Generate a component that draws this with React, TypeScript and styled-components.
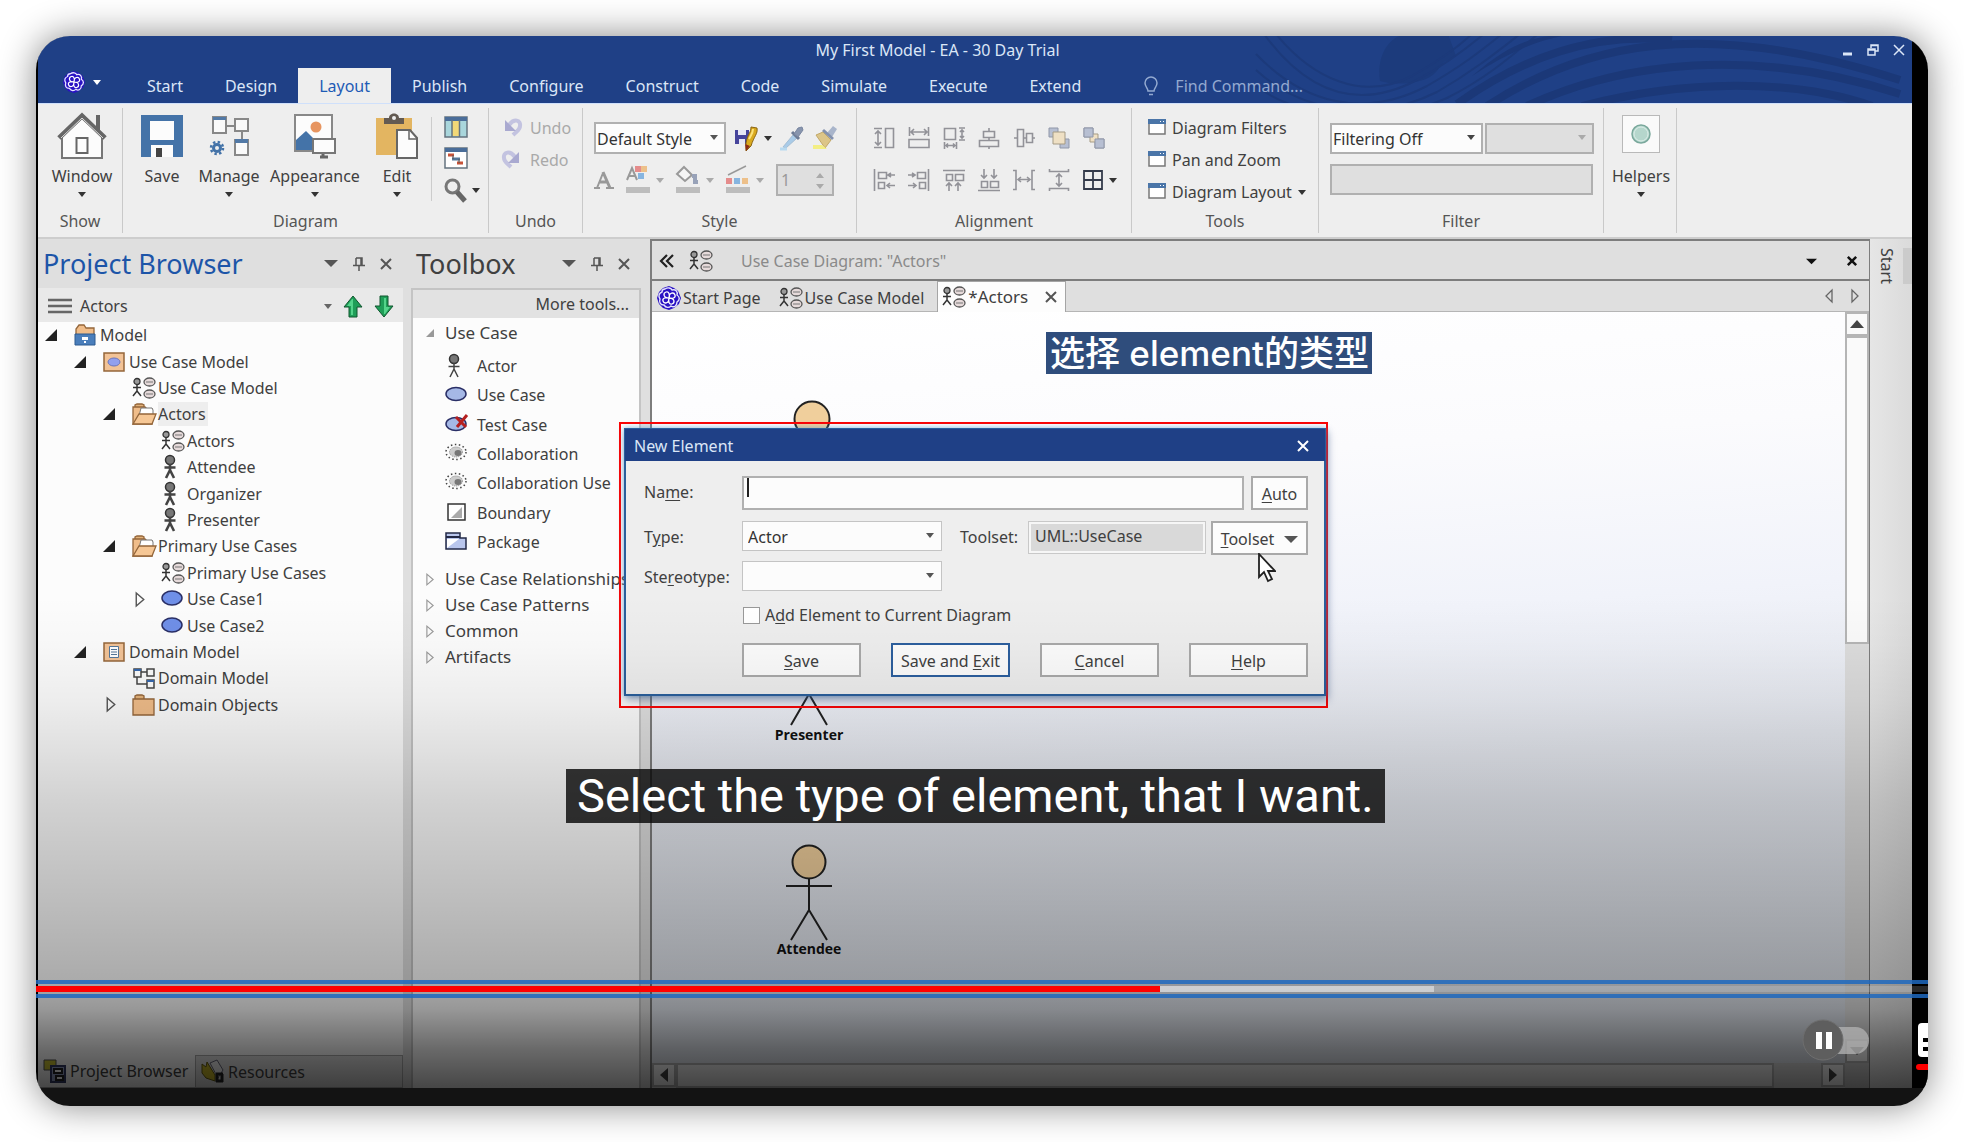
import React from 'react';
import styled, { createGlobalStyle, css } from 'styled-components';

const Global = createGlobalStyle`
  *, *::before, *::after { box-sizing: border-box; }
  body { margin: 0; background: #fff; overflow: hidden; }
  button, input, select { font: inherit; color: inherit; margin: 0; }
  button { background: none; border: 0; padding: 0; cursor: pointer; }
  ul { list-style: none; margin: 0; padding: 0; }
  h2 { margin: 0; font-weight: 400; }
  svg { display: block; flex: none; }
  u { text-underline-offset: 2px; }
`;

const Page = styled.div`
  padding: 36px;
  font: 16px/24px "Noto Sans", "Open Sans", sans-serif;
  color: #404040;
`;

const Frame = styled.main`
  position: relative;
  display: flex;
  flex-direction: column;
  min-height: calc(100vh - 72px);
  border-radius: 34px;
  overflow: hidden;
  background: #131313;
`;

const Shadow = styled.div`
  border-radius: 34px;
  box-shadow: 0 0 36px rgba(0, 0, 0, 0.48);
`;

const Video = styled.div`
  flex: 1;
  display: flex;
  flex-direction: column;
  margin-bottom: 18px;
  border-left: 2px solid #000;
  border-right: 16px solid #000;
  background: #dfdfdf;
`;

/* ---------- title bar ---------- */
const TitleBar = styled.header`
  position: relative;
  height: 67px;
  display: grid;
  grid-template-rows: 28px 39px;
  background: #1f4086;
  color: #dbe6f7;
`;
const Swirl = styled.svg`
  position: absolute;
  right: 0;
  top: 0;
`;
const TitleRow = styled.div`
  position: relative;
  display: grid;
  grid-template-columns: 1fr auto 1fr;
  align-items: center;
  padding: 0 7px 0 0;
  line-height: 28px;
`;
const Title = styled.span`
  padding-right: 68px;
`;
const WinControls = styled.div`
  display: flex;
  justify-content: flex-end;
  gap: 14px;
`;
const TabRow = styled.nav`
  position: relative;
  display: flex;
  align-items: flex-end;
`;
const AppButton = styled.button`
  display: flex;
  align-items: center;
  gap: 8px;
  width: 88px;
  height: 42px;
  padding-left: 25px;
`;
const Tab = styled.button<{ $active?: boolean }>`
  height: 35px;
  padding: 0 21px;
  line-height: 36px;
  color: ${(p) => (p.$active ? '#1d5bb5' : '#dbe6f7')};
  background: ${(p) => (p.$active ? '#eeeeee' : 'transparent')};
`;
const FindBox = styled.label`
  display: flex;
  align-items: center;
  gap: 17px;
  height: 34px;
  margin-left: 42px;
`;
const FindInput = styled.input`
  width: 140px;
  padding: 0;
  border: 0;
  outline: 0;
  background: none;
  &::placeholder { color: #93a9d0; opacity: 1; }
`;

/* ---------- ribbon ---------- */
const Ribbon = styled.section`
  display: flex;
  height: 136px;
  padding: 4px 0;
  background: #eeeeee;
  border-bottom: 2px solid #cdcdcd;
  border-top: 1px solid #cfe0fb;
`;
const Group = styled.div<{ $w: number }>`
  display: flex;
  flex-direction: column;
  width: ${(p) => p.$w}px;
  border-right: 1px solid #c9c9c9;
`;
const GroupBody = styled.div<{ $pad?: number }>`
  flex: 1;
  display: flex;
  padding-left: ${(p) => p.$pad ?? 0}px;
`;
const Caption = styled.div`
  text-align: center;
  line-height: 24px;
  color: #555;
`;
const Big = styled.button<{ $w: number }>`
  display: flex;
  flex: none;
  flex-direction: column;
  align-items: center;
  width: ${(p) => p.$w}px;
  white-space: nowrap;
`;
const BigIcon = styled.span`
  height: 56px;
  display: flex;
  align-items: center;
`;
const ArrowSlot = styled.span`
  height: 12px;
  display: flex;
  align-items: center;
`;
const InnerSep = styled.span`
  width: 1px;
  height: 84px;
  margin: 9px 12px 0 0;
  background: #cccccc;
`;
const IconColumn = styled.div`
  display: flex;
  flex-direction: column;
  gap: 9px;
  padding-top: 8px;
`;
const Inline = styled.button`
  display: flex;
  align-items: center;
  gap: 6px;
  white-space: nowrap;
`;
const LinkColumn = styled.div<{ $gap: number; $dim?: boolean }>`
  display: flex;
  flex-direction: column;
  gap: ${(p) => p.$gap}px;
  padding-top: 8px;
  color: ${(p) => (p.$dim ? '#a9a9a9' : '#404040')};
`;
const Rows = styled.div`
  display: flex;
  flex-direction: column;
  gap: 10px;
  padding-top: 14px;
`;
const Row = styled.div<{ $gap: number }>`
  display: flex;
  align-items: center;
  gap: ${(p) => p.$gap}px;
  height: 32px;
`;
const SelectWrap = styled.span<{ $w: number; $h: number }>`
  position: relative;
  display: block;
  width: ${(p) => p.$w}px;
  height: ${(p) => p.$h}px;
  > svg {
    position: absolute;
    right: 8px;
    top: 50%;
    margin-top: -3px;
    pointer-events: none;
  }
`;
const fieldLook = css<{ $dim?: boolean; $soft?: boolean }>`
  border: ${(p) => (p.$soft ? 1 : 2)}px solid ${(p) => (p.$soft ? '#c4c4c4' : '#b0b0b0')};
  border-radius: 0;
  background: ${(p) => (p.$dim ? '#dfdfdf' : '#fcfcfc')};
  outline: 0;
  opacity: 1;
`;
const Select = styled.select<{ $dim?: boolean; $soft?: boolean }>`
  ${fieldLook}
  appearance: none;
  width: 100%;
  height: 100%;
  padding: 2px 2px 0;
  padding-left: ${(p) => (p.$soft ? 5 : 1)}px;
  color: #333;
`;
const Field = styled.input<{ $dim?: boolean; $soft?: boolean; $w: number; $h: number }>`
  ${fieldLook}
  width: ${(p) => p.$w}px;
  height: ${(p) => p.$h}px;
  padding: 0 3px;
  &:disabled { color: #999; }
`;
const Spinner = styled.span`
  position: relative;
  > svg { position: absolute; right: 10px; top: 9px; }
`;
const HelperBox = styled.span`
  display: grid;
  place-items: center;
  width: 38px;
  height: 38px;
  margin-bottom: 4px;
  border: 1px solid #b9b9b9;
  background: #fafafa;
`;

/* ---------- workspace ---------- */
const Work = styled.div`
  flex: 1;
  display: flex;
  min-height: 0;
`;
const Panel = styled.aside<{ $w: number; $ml?: number }>`
  display: flex;
  flex-direction: column;
  width: ${(p) => p.$w}px;
  margin-left: ${(p) => p.$ml ?? 0}px;
`;
const PanelHead = styled.header`
  display: flex;
  align-items: center;
  height: 49px;
  padding: 0 11px 0 5px;
`;
const PanelTitle = styled.h2<{ $blue?: boolean }>`
  flex: 1;
  font-size: 27px;
  line-height: 48px;
  color: ${(p) => (p.$blue ? '#1d55a8' : '#404040')};
`;
const HeadIcons = styled.span`
  display: flex;
  align-items: center;
  gap: 15px;
`;
const BrowserBar = styled.div`
  display: flex;
  align-items: center;
  height: 34px;
  padding: 2px 9px 0 10px;
  background: #e9e9e9;
`;
const BarName = styled.span`
  flex: 1;
  padding-left: 8px;
`;
const BarIcons = styled.span`
  display: flex;
  align-items: center;
  gap: 11px;
`;
const Tree = styled.ul`
  display: grid;
  grid-auto-rows: 1fr;
  height: 396px;
`;
const TreePane = styled.div`
  flex: 1;
  background: #fcfcfc;
`;
const TreeItem = styled.li<{ $level: number }>`
  display: grid;
  grid-template-columns: 29px 26px auto;
  justify-content: start;
  align-items: center;
  padding-left: ${(p) => 7 + p.$level * 29}px;
`;
const TreeLabel = styled.span<{ $sel?: boolean }>`
  padding-right: 2px;
  background: ${(p) => (p.$sel ? '#eeeeee' : 'transparent')};
  white-space: nowrap;
`;
const BottomTabs = styled.div`
  display: flex;
  height: 33px;
`;
const BottomTab = styled.button<{ $active?: boolean }>`
  display: flex;
  align-items: center;
  gap: 4px;
  padding: 0 6px;
  background: ${(p) => (p.$active ? '#fcfcfc' : '#dfdfdf')};
  border: 1px solid #aaa;
  border-top-width: ${(p) => (p.$active ? 0 : 1)}px;
  border-left: 0;
  flex: ${(p) => (p.$active ? '0 0 158px' : '1')};
`;
const ToolBody = styled.div`
  flex: 1;
  border: 2px solid #c4c4c4;
  border-bottom: 0;
  background: #fcfcfc;
`;
const MoreTools = styled.button`
  display: block;
  width: 100%;
  height: 28px;
  padding-right: 10px;
  text-align: right;
  background: #e2e2e2;
`;
const SectionRow = styled.button<{ $open?: boolean }>`
  display: grid;
  grid-template-columns: 19px 1fr;
  align-items: center;
  width: 100%;
  height: ${(p) => (p.$open ? 30 : 26)}px;
  padding-left: 13px;
  text-align: left;
  white-space: nowrap;
  overflow: hidden;
  font-size: 17px;
`;
const ToolList = styled.ul`
  display: grid;
  grid-auto-rows: 1fr;
  height: 206px;
  margin: 3px 0 9px;
  padding-left: 32px;
`;
const ToolItem = styled.li`
  display: grid;
  grid-template-columns: 32px 1fr;
  align-items: center;
  white-space: nowrap;
`;

/* ---------- document ---------- */
const Doc = styled.section`
  flex: 1;
  display: flex;
  flex-direction: column;
  min-width: 0;
  margin-left: 9px;
  border: 2px solid #7d7d7d;
  border-width: 2px 1px 0 2px;
`;
const DocHead = styled.header`
  display: flex;
  align-items: center;
  height: 40px;
  padding: 2px 12px 0 8px;
  border-bottom: 2px solid #7d7d7d;
  color: #8a8a8a;
`;
const DocTitle = styled.span`
  flex: 1;
  padding-left: 28px;
`;
const DocTabs = styled.div`
  display: flex;
  align-items: flex-end;
  height: 31px;
  border-bottom: 1px solid #b5b5b5;
`;
const DocTab = styled.button<{ $active?: boolean }>`
  display: flex;
  align-items: center;
  gap: 2px;
  height: ${(p) => (p.$active ? 31 : 30)}px;
  padding: 0 ${(p) => (p.$active ? 8 : 12)}px 0 4px;
  margin-bottom: -1px;
  border: 1px solid ${(p) => (p.$active ? '#a5a5a5' : 'transparent')};
  border-bottom: 0;
  background: ${(p) => (p.$active ? '#fdfdfd' : 'transparent')};
  font-size: ${(p) => (p.$active ? 17 : 16)}px;
  white-space: nowrap;
`;
const CloseGap = styled.span`
  padding-left: 15px;
`;
const ScrollTabs = styled.span`
  display: flex;
  gap: 18px;
  margin: 0 10px 9px auto;
`;
const DocMain = styled.div`
  flex: 1;
  display: grid;
  grid-template-columns: 1fr 24px;
  grid-template-rows: 1fr 25px;
`;
const Canvas = styled.div`
  position: relative;
  background: linear-gradient(176deg, #ffffff 0%, #fbfbfd 22%, #f1f3fa 42%, #e6e9f0 60%, #dce1e9 100%);
`;
const VScroll = styled.div`
  display: flex;
  flex-direction: column;
  background: #dcdcdc;
`;
const HScroll = styled.div`
  display: flex;
  background: #d6d6d6;
`;
const ScrollBtn = styled.button`
  display: grid;
  place-items: center;
  width: 24px;
  height: 24px;
  border: 2px solid #b5b5b5;
  background: #fafafa;
`;
const VThumb = styled.div`
  height: 308px;
  margin-bottom: auto;
  border: 2px solid #b5b5b5;
  background: #fafafa;
`;
const HThumb = styled.div`
  flex: 0 0 92%;
  margin-right: auto;
  border: 2px solid #b5b5b5;
  background: #f0f0f0;
`;
const Corner = styled.div`
  background: #c8c8c8;
`;
const Figure = styled.figure<{ $x: number; $y: number }>`
  position: absolute;
  left: ${(p) => p.$x}px;
  top: ${(p) => p.$y}px;
  width: 100px;
  margin: 0;
  display: flex;
  flex-direction: column;
  align-items: center;
  font: 700 14px/18px "Open Sans", sans-serif;
  color: #111;
`;
const SideStrip = styled.aside`
  display: flex;
  width: 42px;
  padding-top: 9px;
  background: linear-gradient(90deg, #e6e6e6, #dadada);
`;
const SideLabel = styled.button`
  writing-mode: vertical-rl;
  align-self: flex-start;
  width: 33px;
  line-height: 33px;
`;
const SideMark = styled.span`
  width: 9px;
  height: 36px;
  background: #cbcbcb;
`;

/* ---------- dialog ---------- */
const Highlight = styled.div`
  position: absolute;
  left: 583px;
  top: 386px;
  width: 709px;
  border: 2px solid #fb0505;
  padding: 4px 0 10px 3px;
`;
const Dialog = styled.form`
  border: 2px solid #2a5f9c;
  background: #eeeeee;
  box-shadow: 2px 4px 8px rgba(40, 60, 110, 0.4), 0 0 5px rgba(90, 170, 230, 0.6);
`;
const DialogHead = styled.header`
  display: flex;
  align-items: center;
  justify-content: space-between;
  height: 32px;
  margin: -1px;
  padding: 2px 16px 0 9px;
  background: #1f4086;
  color: #dbe6f7;
`;
const DialogBody = styled.div`
  display: flex;
  flex-direction: column;
  padding: 16px 16px 17px 18px;
`;
const FormRow = styled.div<{ $h: number; $mb: number }>`
  display: flex;
  align-items: flex-start;
  height: ${(p) => p.$h}px;
  margin-bottom: ${(p) => p.$mb}px;
`;
const FormLabel = styled.label<{ $w: number; $pad?: number }>`
  width: ${(p) => p.$w}px;
  padding-left: ${(p) => p.$pad ?? 0}px;
  line-height: 32px;
  white-space: nowrap;
`;
const PushButton = styled.button<{ $w: number; $def?: boolean; $right?: boolean }>`
  display: flex;
  align-items: center;
  justify-content: center;
  gap: 10px;
  width: ${(p) => p.$w}px;
  height: 34px;
  margin-left: ${(p) => (p.$right ? 'auto' : 0)};
  padding-top: 2px;
  border: ${(p) => (p.$def ? '2px solid #2c5f9e' : '2px solid #a9a9a9')};
  background: #fcfcfc;
  white-space: nowrap;
`;
const CheckLabel = styled.label`
  display: flex;
  align-items: center;
  gap: 5px;
  height: 24px;
  padding-left: 99px;
  margin-bottom: 16px;
`;
const Check = styled.input`
  appearance: none;
  width: 17px;
  height: 17px;
  border: 1px solid #999;
  background: #fff;
`;
const ButtonRow = styled.div`
  display: flex;
  justify-content: space-between;
  padding-left: 98px;
`;
const Pointer = styled.svg`
  position: absolute;
  left: 637px;
  top: 129px;
`;
const NameBox = styled.span`
  position: relative;
  display: block;
  height: 34px;
`;
const Caret = styled.i`
  position: absolute;
  left: 5px;
  top: 2px;
  width: 2px;
  height: 19px;
  background: #222;
`;
const ReadOnly = styled.input`
  width: 178px;
  height: 33px;
  padding: 0 6px 4px;
  border: 1px solid #c8c8c8;
  outline: 2px solid #f6f6f6;
  outline-offset: -3px;
  border-radius: 0;
  background: #d9d9d9;
`;

/* ---------- player overlays ---------- */
const Shade = styled.div`
  position: absolute;
  inset: 560px 0 18px 2px;
  pointer-events: none;
  background: linear-gradient(
    180deg,
    rgba(0, 0, 0, 0) 0%,
    rgba(0, 0, 0, 0.02) 10%,
    rgba(0, 0, 0, 0.06) 21%,
    rgba(0, 0, 0, 0.11) 31%,
    rgba(0, 0, 0, 0.17) 42%,
    rgba(0, 0, 0, 0.25) 62%,
    rgba(0, 0, 0, 0.32) 78%,
    rgba(0, 0, 0, 0.4) 84%,
    rgba(0, 0, 0, 0.58) 92%,
    rgba(0, 0, 0, 0.72) 100%
  );
`;
const TopCaption = styled.p`
  position: absolute;
  left: 1010px;
  top: 296px;
  margin: 0;
  padding: 0 3px 0 4px;
  background: #2f4d7c;
  color: #fff;
  font: 500 35px/42px Inter, "Noto Sans CJK SC", sans-serif;
  white-space: nowrap;
`;
const Subtitle = styled.p`
  position: absolute;
  left: 530px;
  top: 733px;
  margin: 0;
  padding: 0 11px;
  background: rgba(8, 8, 8, 0.82);
  color: #fff;
  font: 47px/54px Roboto, sans-serif;
  white-space: nowrap;
`;
const Progress = styled.div`
  position: absolute;
  left: 0;
  right: 0;
  bottom: 108px;
  height: 18px;
  padding: 2px 0;
  border: 4px solid rgba(30, 105, 190, 0.85);
  border-width: 4px 0;
`;
const ProgressTrack = styled.div`
  display: flex;
  height: 6px;
  background: rgba(255, 255, 255, 0.16);
`;
const Played = styled.div`
  background: #ff0000;
`;
const Buffered = styled.div`
  background: rgba(255, 255, 255, 0.45);
`;
const Autoplay = styled.button`
  position: absolute;
  right: 58px;
  bottom: 45px;
`;
const CcButton = styled.button`
  position: absolute;
  right: -26px;
  bottom: 36px;
  display: grid;
  gap: 7px;
  justify-items: start;
`;

/* ---------- icons ---------- */
type Kids = { children?: React.ReactNode };
const I = ({ w = 22, h = 22, vb, children }: Kids & { w?: number; h?: number; vb?: string }) => (
  <svg width={w} height={h} viewBox={vb ?? `0 0 ${w} ${h}`} fill="none" overflow="visible" aria-hidden="true">
    {children}
  </svg>
);
const Down = ({ s = 8, c = '#333' }: { s?: number; c?: string }) => (
  <I w={s} h={s > 10 ? 7 : 5} vb={s > 10 ? '0 0 14 7' : '0 0 8 5'}>
    <path d={s > 10 ? 'M0 0h14L7 7z' : 'M0 0h8L4 5z'} fill={c} />
  </I>
);
const Cross = ({ s = 12, c = '#555', w = 2 }: { s?: number; c?: string; w?: number }) => (
  <I w={s} h={s} vb="0 0 12 12"><path d="M1 1l10 10M11 1L1 11" stroke={c} strokeWidth={w} /></I>
);
const Pin = () => (
  <I w={12} h={14}><path d="M3 1h6v7M3 1v7M8 1v7M0 8.500h12M6 9v5" stroke="#555" strokeWidth="1.500" /></I>
);
const Logo = ({ s = 22 }: { s?: number }) => (
  <I w={s} h={s} vb="0 0 24 24">
    <path d="M12 0l5 2 4 3 3 7-2 6-5 4-5 2-6-2-4-4-2-6 2-6 4-4z" fill="#2a12c4" />
    <path d="M8 3c3-2 6-1 7 1 4-1 6 2 5 5 3 2 3 5 0 7 0 4-3 6-6 4-2 2-5 2-7-1-4 0-5-3-4-6-2-3-1-6 2-7 0-2 1-3 3-3z" stroke="#e6e4ff" strokeWidth="1.400" />
    <path d="M12 12C6 12 6 7 9 6s4 3 3 6c0-6 5-6 6-3s-3 4-6 3c6 0 6 5 3 6s-4-3-3-6c0 6-5 6-6 3s3-4 6-3" stroke="#fff" strokeWidth="1.300" />
  </I>
);
const UseCaseDiagram = () => (
  <I w={24} h={22}>
    <circle cx="5" cy="4.500" r="3" fill="#999" stroke="#333" strokeWidth="1.300" />
    <path d="M5 8v6M1 10.500h8M5 14l-4 5M5 14l4 5" stroke="#333" strokeWidth="1.500" />
    <ellipse cx="17.500" cy="5" rx="5.500" ry="4" fill="#e6dada" stroke="#555" strokeWidth="1.300" />
    <ellipse cx="17.500" cy="17" rx="5.500" ry="4" fill="#e6dada" stroke="#555" strokeWidth="1.300" />
    <path d="M14 5h7M14 17h7" stroke="#777" />
  </I>
);
const Person = ({ thin }: { thin?: boolean }) => (
  <I w={22} h={24}>
    <circle cx="9" cy="5" r="4.500" fill="#777" stroke="#333" strokeWidth="1.500" />
    <path d="M9 9v7M3.500 12.500h11M9 15l-4 8M9 15l4 8" stroke="#444" strokeWidth={thin ? 1.5 : 2.6} />
  </I>
);
const Oval = ({ soft }: { soft?: boolean }) => (
  <I w={22} h={16}><ellipse cx="11" cy="7" rx="10" ry={soft ? 6.5 : 7} fill={soft ? '#a5b8e6' : '#6f8fe8'} stroke="#2a2f66" strokeWidth="1.500" /></I>
);
const Folder = ({ open }: { open?: boolean }) => (
  <I w={24} h={22}>
    <path d="M3 5V2l2-1h5l2 1v3" fill="#e3b27a" stroke="#94663a" strokeWidth="1.300" />
    <path d={open ? 'M1 4h12l2 2h5v15H1z' : 'M1 5h21v16H1z'} fill="#f0bd8a" stroke="#94663a" strokeWidth="1.300" />
    {open && <path d="M9 5h11l1 2v6H7z" fill="#fff" stroke="#777" />}
    {open && <path d="M1 21L7 11h17l-4 10z" fill="#f6c795" stroke="#94663a" strokeWidth="1.300" />}
  </I>
);
const ModelRoot = () => (
  <I w={22} h={22}>
    <path d="M2 10V5l3-4h5l2 3h8v6" fill="#f0bd8a" stroke="#94663a" strokeWidth="1.300" />
    <path d="M1 10h20v11H1z" fill="#4a7ebb" stroke="#2c5a90" />
    <path d="M8 13h6v3H8z" fill="#fff" /><path d="M11 17v2" stroke="#fff" strokeWidth="2" />
  </I>
);
const ViewIcon = ({ kind }: { kind: 'oval' | 'list' }) => (
  <I w={22} h={20}>
    <path d="M1 1h20v18H1z" fill="#f2c397" stroke="#94663a" strokeWidth="1.500" />
    {kind === 'oval' ? (
      <ellipse cx="11" cy="10" rx="6" ry="4" fill="#92a0ee" stroke="#6b75bb" />
    ) : (
      <><path d="M6.500 4.500h9v11h-9z" fill="#fff" stroke="#557799" /><path d="M8 7.500h6M8 10h6M8 12.500h6" stroke="#557799" /></>
    )}
  </I>
);
const ClassDiagram = () => (
  <I w={24} h={22}>
    <path d="M2 2h7v8H2zM15 2h7v7h-7zM15 13h7v8h-7zM9 5h6M5 10v7h10" stroke="#444" strokeWidth="1.500" />
    <path d="M2 2h7v2H2zM15 13h7v2h-7z" fill="#3567ad" />
  </I>
);
const Expanded = ({ c = '#222', s = 12 }: { c?: string; s?: number }) => (
  <I w={s} h={s} vb="0 0 12 12"><path d="M12 0v12H0z" fill={c} /></I>
);
const Collapsed = ({ c = '#555', w = 9 }: { c?: string; w?: number }) => (
  <I w={w} h={w + 5} vb="0 0 9 14"><path d="M1 1l7 6-7 6z" stroke={c} strokeWidth="1.300" /></I>
);
const ArrowCell = styled.span<{ $in?: boolean }>`
  padding-left: ${(p) => (p.$in ? 3 : 0)}px;
`;
const Green = ({ down }: { down?: boolean }) => (
  <I w={20} h={21}>
    <g transform={down ? 'rotate(180 10 10.5)' : undefined}>
      <path d="M10 0l9 11h-5v10H6V11H1z" fill="#1f9e58" stroke="#11562f" />
      <path d="M9 3L4 10h4v9h2V3z" fill="#54d48b" />
    </g>
  </I>
);
const Cloud = () => (
  <I w={22} h={18}>
    <ellipse cx="11" cy="7" rx="10" ry="7.500" stroke="#444" strokeWidth="1.500" strokeDasharray="1.500 2.500" />
    <ellipse cx="11" cy="7" rx="6.500" ry="5" fill="#ccc" stroke="#888" strokeDasharray="1 1" />
    <ellipse cx="13" cy="8" rx="3.500" ry="3" fill="#777" />
  </I>
);
const WindowIcon = () => (
  <I w={18} h={16}>
    <path d="M1 0h16v14H1z" fill="#fff" stroke="#777" strokeWidth="1.500" />
    <path d="M0 -1h18v5H0z" fill="#4a75a8" /><path d="M12 1.500h1M15 1.500h1" stroke="#fff" />
  </I>
);
const House = () => (
  <I w={46} h={46}>
    <path d="M39 2v16" stroke="#666" strokeWidth="4" />
    <path d="M3 22L23 3l20 19v23H3z" fill="#fcfcfc" stroke="#777" strokeWidth="2" />
    <path d="M0 25L23 3l23 22" stroke="#666" strokeWidth="5" />
    <path d="M2 25L23 5l21 20" stroke="#ddd" strokeWidth="1" />
    <path d="M17.500 25h11v15h-11z" stroke="#666" strokeWidth="2" />
  </I>
);
const Disk = () => (
  <I w={42} h={42}>
    <path d="M0 0h42v42H0z" fill="#4473a8" />
    <path d="M9 6h24v19H9zM10 30h22v12H10z" fill="#fcfcfc" /><path d="M15 33h6v9h-6z" fill="#444" />
  </I>
);
const ManageIcon = () => (
  <I w={40} h={42}>
    <path d="M4 2h13v16H4zM26 4h13v12H26zM26 25h13v15H26zM17 11h9M33 16v9" stroke="#888" strokeWidth="2" fill="#fafafa" />
    <path d="M4 2h13v3H4zM26 24h13v4H26z" fill="#5279a6" />
    <circle cx="8" cy="33" r="3.500" stroke="#4473a8" strokeWidth="3" />
    <circle cx="8" cy="33" r="6" stroke="#4473a8" strokeWidth="2.500" strokeDasharray="2.400 2.300" />
  </I>
);
const PictureIcon = () => (
  <I w={42} h={44}>
    <path d="M1 1h37v36H1z" fill="#fcfcfc" stroke="#888" strokeWidth="2" />
    <path d="M2 26l10-9 8 8v11H2z" fill="#4473a8" /><circle cx="22" cy="13" r="5.500" fill="#e79560" />
    <path d="M19 25h22v14H19z" fill="#fcfcfc" stroke="#777" strokeWidth="2" /><path d="M29 40v3M26 43h8" stroke="#666" strokeWidth="3" />
  </I>
);
const Clipboard = () => (
  <I w={42} h={46}>
    <path d="M0 5h36v37H0z" fill="#e3b561" /><path d="M8 11V5h5c0-6 10-6 10 0h5v6z" fill="#635a52" /><circle cx="18" cy="5" r="2" fill="#eee" />
    <path d="M21 17h13l7 8v20H21z" fill="#fcfcfc" stroke="#666" strokeWidth="2" /><path d="M33 18v8h8" stroke="#666" strokeWidth="1.500" />
  </I>
);
const Columns = () => (
  <I w={24} h={22}>
    <path d="M1 1h22v20H1z" fill="#a9d6dc" stroke="#64737f" strokeWidth="1.500" /><path d="M8 4h8v16H8z" fill="#f2d877" />
    <path d="M1 1h22v4H1z" fill="#4a6d99" /><path d="M8 4v17M15.500 4v17" stroke="#64737f" strokeWidth="1.500" />
  </I>
);
const Gantt = () => (
  <I w={24} h={22}>
    <path d="M1 1h22v20H1z" fill="#fff" stroke="#64737f" strokeWidth="1.500" /><path d="M1 1h22v4H1z" fill="#4a6d99" />
    <path d="M4 8h6M13 16h6" stroke="#c75338" strokeWidth="3" /><path d="M8 12h8" stroke="#557799" strokeWidth="3" /><path d="M9 8v4M15 12v4" stroke="#555" />
  </I>
);
const Magnifier = () => (
  <I w={22} h={24}>
    <circle cx="8.500" cy="8.500" r="6.500" stroke="#777" strokeWidth="3" /><path d="M13 14l8 9" stroke="#666" strokeWidth="5" />
  </I>
);
const UndoIcon = ({ redo }: { redo?: boolean }) => (
  <I w={20} h={20}>
    <g transform={redo ? 'matrix(-1 0 0 1 16 0)' : undefined}>
      <path d="M5 7C10 0 17 2 16 8c0 4-3 5-7 9" stroke="#c3c3e0" strokeWidth="4" />
      <path d="M1 2v11h11z" fill="#a9a9d0" />
    </g>
  </I>
);
const SavePen = () => (
  <I w={24} h={26}>
    <path d="M1 5h14v14H1z" fill="#46449b" /><path d="M4 5h8v5H4zM5 14h6v5H5z" fill="#e7e7f5" />
    <path d="M12 18C14 8 17 8 17 2l6 1c1 6-3 8-6 18l-5 5z" fill="#d9a91e" stroke="#8a6410" />
    <path d="M15 14c2-4 4-6 4-10" stroke="#fbe27c" strokeWidth="2" /><path d="M11 19l5 2-4 5z" fill="#8b2b16" />
  </I>
);
const Dropper = () => (
  <I w={24} h={24}>
    <path d="M3 21L13 9l4 3L6 22z" fill="#a9cbe8" stroke="#a3bdd4" /><path d="M0 23h7" stroke="#b8d9ef" strokeWidth="3" />
    <path d="M12 6l7 7" stroke="#6d7b95" strokeWidth="3" /><path d="M14 8l4-6 4-1 1 3-5 7z" fill="#8895ae" stroke="#7a87a1" />
  </I>
);
const Brush = () => (
  <I w={26} h={26}>
    <path d="M15 8l6-7 4 3-5 8z" fill="#a9b5cb" /><path d="M4 10l7-3 8 8-6 8z" fill="#dcc588" stroke="#c2a869" />
    <path d="M11 5l10 9" stroke="#8391ad" strokeWidth="3" /><path d="M1 20h9l5 4H1z" fill="#f3ee84" />
  </I>
);
const FontA = () => (
  <I w={20} h={18}><path d="M0 17h6M12 17h8M3 17L9 2" stroke="#999" strokeWidth="2" /><path d="M9 1l7 16M6 11h8" stroke="#999" strokeWidth="3" /></I>
);
const ColorTool = ({ kind }: { kind: 'text' | 'fill' | 'line' }) => (
  <I w={24} h={28}>
    <path d="M0 21h24v6H0z" fill="#bdbdbd" />
    {kind === 'text' && <><path d="M1 14L6 2l5 12M3 10h6" stroke="#999" strokeWidth="2" /><path d="M9 0h6v6H9z" fill="#e58c8c" /><path d="M15 0h6v6h-6z" fill="#edc08a" /><path d="M12 7h6v6h-6z" fill="#87b5e0" /></>}
    {kind === 'fill' && <><path d="M8 1l8 8-7 6-8-7z" fill="#f5f5f5" stroke="#999" strokeWidth="2" /><path d="M16 10h3v6h3" stroke="#98a2b8" strokeWidth="4" /></>}
    {kind === 'line' && <><path d="M2 9L20 0" stroke="#999" strokeWidth="1.500" /><path d="M0 12h6v6H0z" fill="#e58c8c" /><path d="M8 12h6v6H8z" fill="#87b5e0" /><path d="M16 12h6v6h-6z" fill="#edc08a" /></>}
  </I>
);
const alignTop = [
  'M12.500 1.500h8v19h-8zM1 1.500h8M1 20.500h8M5 4v14M2 7l3-3 3 3M2 15l3 3 3-3',
  'M1 12.500h20v8H1zM1.500 0v9M20.500 0v9M3 5h16M6 2L3 5l3 3M16 2l3 3-3 3',
  'M1.500 1.500h11v11h-11zM16 1h6M16 13h6M19 3v8M17 5l2-2 2 2M17 9l2 2 2-2M1.500 15v7M13.500 15v7M3 18.500h9M5 16.500l-2 2 2 2M10 16.500l2 2-2 2',
  'M5.500 4.500h11v6h-11zM1.500 13.500h19v6h-19zM11 1v3M11 10v3M11 20v2',
  'M4.500 2.500h6v17h-6zM13.500 6.500h6v9h-6zM1 11h3M10 11h3M20 11h2',
];
const alignBottom = [
  'M1.500 0v22M5.500 3.500h8v6h-8zM5.500 13.500h6v6h-6zM22 6h-6M18 4l-3 2 3 2M22 16.500h-8M17 14l-3 2.500 3 2.500',
  'M20.500 0v22M9.500 3.500h8v6h-8zM11.500 13.500h6v6h-6zM0 6h6M4 4l3 2-3 2M0 16.500h8M5 14l3 2.500-3 2.500',
  'M0 1.500h22M3.500 5.500h6v6h-6zM12.500 5.500h8v6h-8zM6 22v-7M3 17l3-3 3 3M15 22v-7M12 17l3-3 3 3',
  'M0 21.500h22M3.500 12.500h6v6h-6zM12.500 12.500h8v6h-8zM6 0v8M3 6l3 3 3-3M16 0v8M13 6l3 3 3-3',
  'M0 1.500h3v19H0M22 1.500h-3v19h3M5 10.500h12M8 8l-3 2.500L8 13M14 8l3 2.500-3 2.500',
  'M1.500 0v2.500h19V0M1.500 22v-2.500h19V22M11 5v12M8 8l3-3 3 3M8 14l3 3 3-3',
];
const Align = ({ d }: { d: string }) => (<I><path d={d} stroke="#929298" strokeWidth="1.600" /></I>);
const Stack = ({ front }: { front?: boolean }) => (
  <I>
    <path d="M1 1h9v9H1zM12 12h9v9h-9z" fill="#b7bfd2" stroke="#9097a8" />
    <path d={front ? 'M5 5h12v12H5z' : 'M7 7h8v8H7z'} fill="#efe0c4" stroke="#a59b85" />
    {!front && <path d="M1 1h9v9H1zM12 12h9v9h-9z" fill="#b7bfd2" stroke="#9097a8" />}
  </I>
);
const GridIcon = () => (<I w={20} h={22}><path d="M1 2h18v18H1zM10 2v18M1 11h18" stroke="#333a4a" strokeWidth="1.800" /></I>);
const HollowTri = ({ left }: { left?: boolean }) => (
  <I w={8} h={12}><path d={left ? 'M7 0v12L1 6z' : 'M1 0v12l6-6z'} stroke="#666" strokeWidth="1.300" /></I>
);
const Tri = ({ d }: { d: string }) => (<I w={14} h={14}><path d={d} fill="#444" /></I>);
const TestCase = () => (
  <I w={24} h={18}>
    <ellipse cx="11" cy="8" rx="10" ry="6.500" fill="#a5b8e6" stroke="#2a2f66" strokeWidth="1.500" />
    <path d="M11 1l10 10M22-1L12 11" stroke="#b52020" strokeWidth="3" />
  </I>
);
const BoundaryIcon = () => (
  <I w={22} h={20}><path d="M3 1h17v16H3z" fill="#fff" stroke="#333" strokeWidth="1.500" /><path d="M6 15L17 4v11z" fill="#aaa" /></I>
);
const PackageIcon = () => (
  <I w={22} h={18}><path d="M1 5V0h14v5h6v11H1z" fill="#b9c6ec" stroke="#222845" strokeWidth="1.500" /><path d="M1 4h14" stroke="#222845" strokeWidth="2" /><path d="M2 15L14 6H2z" fill="#fff" /></I>
);
const BrowserTabIcon = () => (
  <I w={22} h={24}><path d="M0 1h12v10H0z" fill="#c9c132" stroke="#555" /><path d="M7 7h14v16H7z" fill="#99a5cc" stroke="#333a66" strokeWidth="2" /><path d="M10 10h8v4h-8zM12 17h7v4h-7z" fill="#fff" stroke="#222" strokeWidth="2" /></I>
);
const ResourceIcon = () => (
  <I w={22} h={24}><path d="M8 3l7-3 6 10-5 8z" fill="#eee" stroke="#667" /><path d="M0 4l4 3 1-5 8 13v6L4 18 0 13z" fill="#c9b82a" stroke="#665c10" /><path d="M14 14h7M14 21h7M15 14v8M20 14v8" stroke="#222" strokeWidth="3" /></I>
);

/* ---------- data ---------- */
const tabs = ['Start', 'Design', 'Layout', 'Publish', 'Configure', 'Construct', 'Code', 'Simulate', 'Execute', 'Extend'];

type Node = { level: number; label: string; icon: React.ReactNode; open?: boolean; sel?: boolean };
const tree: Node[] = [
  { level: 0, label: 'Model', icon: <ModelRoot />, open: true },
  { level: 1, label: 'Use Case Model', icon: <ViewIcon kind="oval" />, open: true },
  { level: 2, label: 'Use Case Model', icon: <UseCaseDiagram /> },
  { level: 2, label: 'Actors', icon: <Folder open />, open: true, sel: true },
  { level: 3, label: 'Actors', icon: <UseCaseDiagram /> },
  { level: 3, label: 'Attendee', icon: <Person /> },
  { level: 3, label: 'Organizer', icon: <Person /> },
  { level: 3, label: 'Presenter', icon: <Person /> },
  { level: 2, label: 'Primary Use Cases', icon: <Folder open />, open: true },
  { level: 3, label: 'Primary Use Cases', icon: <UseCaseDiagram /> },
  { level: 3, label: 'Use Case1', icon: <Oval />, open: false },
  { level: 3, label: 'Use Case2', icon: <Oval /> },
  { level: 1, label: 'Domain Model', icon: <ViewIcon kind="list" />, open: true },
  { level: 2, label: 'Domain Model', icon: <ClassDiagram /> },
  { level: 2, label: 'Domain Objects', icon: <Folder />, open: false },
];
const tools: [string, React.ReactNode][] = [
  ['Actor', <Person thin />],
  ['Use Case', <Oval soft />],
  ['Test Case', <TestCase />],
  ['Collaboration', <Cloud />],
  ['Collaboration Use', <Cloud />],
  ['Boundary', <BoundaryIcon />],
  ['Package', <PackageIcon />],
];

const PanelIcons = () => (
  <HeadIcons>
    <button aria-label="Menu"><Down s={14} c="#555" /></button>
    <button aria-label="Pin"><Pin /></button>
    <button aria-label="Close"><Cross /></button>
  </HeadIcons>
);

const BigButton = ({ w, label, icon, menu }: { w: number; label: string; icon: React.ReactNode; menu?: boolean }) => (
  <Big $w={w}>
    <BigIcon>{icon}</BigIcon>
    {label}
    {menu && <ArrowSlot><Down /></ArrowSlot>}
  </Big>
);

function Header() {
  return (
    <TitleBar>
      <Swirl width="660" height="67" viewBox="0 0 660 67" fill="none" aria-hidden="true">
        <path d="M128 45c-4-26 10-45 26-47h42l8 22-12 6-8 10c-10 12-40 14-56 9z" fill="#1c3b7c" />
        <g stroke="#1c3a7b" strokeWidth="2">
          <path d="M12-2C50 50 100 78 165 44 195 28 215 12 232-2M24-2C60 42 110 66 160 40 185 26 205 12 220-2M4 18C50 66 110 84 175 50 210 30 230 14 250-2M4 34C50 76 120 88 185 56 220 36 245 16 268-2M4 50C50 84 130 90 195 62 235 42 262 18 286-2" />
        </g>
        <g stroke="#1b3878" strokeWidth="8">
          <path d="M205 68C270 22 340-4 420 4M235 70C330 8 450-20 648 44M275 70C370 26 500 10 648 58M330 70C430 44 540 42 620 70" />
        </g>
        <path d="M310 0c-30 6-60 20-90 40 40-34 60-40 100-42z" fill="#1b3878" />
      </Swirl>
      <TitleRow>
        <span />
        <Title>My First Model - EA - 30 Day Trial</Title>
        <WinControls>
          <button aria-label="Minimize"><I w={10} h={12}><path d="M0 10h9" stroke="#dbe6f7" strokeWidth="3" /></I></button>
          <button aria-label="Restore"><I w={12} h={12}><path d="M4 4V1h7v6H8M1 5h7v6H1zM1 6h7M4 1.500h7" stroke="#dbe6f7" strokeWidth="1.500" /></I></button>
          <button aria-label="Close window"><Cross c="#dbe6f7" w={1.5} /></button>
        </WinControls>
      </TitleRow>
      <TabRow>
        <AppButton aria-label="Application menu"><Logo /><Down c="#fff" /></AppButton>
        {tabs.map((t) => <Tab key={t} $active={t === 'Layout'}>{t}</Tab>)}
        <FindBox>
          <I w={14} h={20}><path d="M4 15c0-3-3-4-3-8a6 6 0 0112 0c0 4-3 5-3 8zM5 18.500h4" stroke="#93a9d0" strokeWidth="1.500" /></I>
          <FindInput aria-label="Find Command" placeholder="Find Command..." />
        </FindBox>
      </TabRow>
    </TitleBar>
  );
}

function RibbonBar() {
  return (
    <Ribbon>
      <Group $w={85}>
        <GroupBody $pad={2}><BigButton w={84} label="Window" icon={<House />} menu /></GroupBody>
        <Caption>Show</Caption>
      </Group>
      <Group $w={366}>
        <GroupBody $pad={10}>
          <BigButton w={58} label="Save" icon={<Disk />} />
          <BigButton w={76} label="Manage" icon={<ManageIcon />} menu />
          <BigButton w={96} label="Appearance" icon={<PictureIcon />} menu />
          <BigButton w={68} label="Edit" icon={<Clipboard />} menu />
          <InnerSep />
          <IconColumn>
            <button aria-label="Columns"><Columns /></button>
            <button aria-label="Gantt"><Gantt /></button>
            <Inline aria-label="Zoom"><Magnifier /><Down /></Inline>
          </IconColumn>
        </GroupBody>
        <Caption>Diagram</Caption>
      </Group>
      <Group $w={94}>
        <GroupBody $pad={15}>
          <LinkColumn $gap={8} $dim>
            <Inline><UndoIcon />Undo</Inline>
            <Inline><UndoIcon redo />Redo</Inline>
          </LinkColumn>
        </GroupBody>
        <Caption>Undo</Caption>
      </Group>
      <Group $w={274}>
        <GroupBody $pad={11}>
          <Rows>
            <Row $gap={8}>
              <SelectWrap $w={132} $h={32}>
                <Select aria-label="Style"><option>Default Style</option></Select><Down c="#555" />
              </SelectWrap>
              <Inline aria-label="Save style"><SavePen /><Down /></Inline>
              <button aria-label="Pick style"><Dropper /></button>
              <button aria-label="Apply style"><Brush /></button>
            </Row>
            <Row $gap={12}>
              <button aria-label="Font"><FontA /></button>
              <Inline aria-label="Text colour"><ColorTool kind="text" /><Down c="#aaa" /></Inline>
              <Inline aria-label="Fill colour"><ColorTool kind="fill" /><Down c="#aaa" /></Inline>
              <Inline aria-label="Line colour"><ColorTool kind="line" /><Down c="#aaa" /></Inline>
              <Spinner>
                <Field aria-label="Line width" defaultValue="1" disabled $dim $w={58} $h={32} />
                <I w={8} h={16}><path d="M0 5l4-5 4 5zM0 11l4 5 4-5z" fill="#aaa" /></I>
              </Spinner>
            </Row>
          </Rows>
        </GroupBody>
        <Caption>Style</Caption>
      </Group>
      <Group $w={275}>
        <GroupBody $pad={16}>
          <Rows>
            <Row $gap={13}>
              {alignTop.map((d) => <button key={d} aria-label="Align"><Align d={d} /></button>)}
              <button aria-label="Bring to front"><Stack front /></button>
              <button aria-label="Send to back"><Stack /></button>
            </Row>
            <Row $gap={13}>
              {alignBottom.map((d) => <button key={d} aria-label="Align"><Align d={d} /></button>)}
              <Inline aria-label="Grid"><GridIcon /><Down /></Inline>
            </Row>
          </Rows>
        </GroupBody>
        <Caption>Alignment</Caption>
      </Group>
      <Group $w={187}>
        <GroupBody $pad={16}>
          <LinkColumn $gap={8}>
            <Inline><WindowIcon />Diagram Filters</Inline>
            <Inline><WindowIcon />Pan and Zoom</Inline>
            <Inline><WindowIcon />Diagram Layout <Down /></Inline>
          </LinkColumn>
        </GroupBody>
        <Caption>Tools</Caption>
      </Group>
      <Group $w={285}>
        <GroupBody $pad={11}>
          <Rows>
            <Row $gap={2}>
              <SelectWrap $w={153} $h={31}>
                <Select aria-label="Filtering"><option>Filtering Off</option></Select><Down c="#444" />
              </SelectWrap>
              <SelectWrap $w={109} $h={31}>
                <Select aria-label="Filter value" $dim disabled /><Down c="#aaa" />
              </SelectWrap>
            </Row>
            <Field aria-label="Filter text" disabled $dim $w={263} $h={31} />
          </Rows>
        </GroupBody>
        <Caption>Filter</Caption>
      </Group>
      <Group $w={73}>
        <GroupBody>
          <BigButton
            w={74}
            label="Helpers"
            icon={<HelperBox><I w={20} h={20}><circle cx="10" cy="10" r="9" fill="#b5d6cc" stroke="#7aa89c" strokeWidth="1.5" /><circle cx="10" cy="10" r="7" stroke="#dcede8" /></I></HelperBox>}
            menu
          />
        </GroupBody>
      </Group>
    </Ribbon>
  );
}

function ProjectBrowser() {
  return (
    <Panel $w={365}>
      <PanelHead><PanelTitle $blue>Project Browser</PanelTitle><PanelIcons /></PanelHead>
      <BrowserBar>
        <I w={24} h={16}><path d="M0 2h24M0 8h24M0 14h24" stroke="#666" strokeWidth="2.500" /></I>
        <BarName>Actors</BarName>
        <BarIcons>
          <Down c="#666" />
          <button aria-label="Up"><Green /></button>
          <button aria-label="Down"><Green down /></button>
        </BarIcons>
      </BrowserBar>
      <TreePane>
        <Tree>
          {tree.map((n, i) => (
            <TreeItem key={i} $level={n.level}>
              <ArrowCell $in={n.open === false}>
                {n.open === true ? <Expanded /> : n.open === false ? <Collapsed w={10} /> : null}
              </ArrowCell>
              {n.icon}
              <TreeLabel $sel={n.sel}>{n.label}</TreeLabel>
            </TreeItem>
          ))}
        </Tree>
      </TreePane>
      <BottomTabs>
        <BottomTab $active><BrowserTabIcon />Project Browser</BottomTab>
        <BottomTab><ResourceIcon />Resources</BottomTab>
      </BottomTabs>
    </Panel>
  );
}

function Toolbox() {
  return (
    <Panel $w={230} $ml={8}>
      <PanelHead><PanelTitle>Toolbox</PanelTitle><PanelIcons /></PanelHead>
      <ToolBody>
        <MoreTools>More tools...</MoreTools>
        <SectionRow $open><Expanded c="#999" s={8} />Use Case</SectionRow>
        <ToolList>
          {tools.map(([name, icon]) => <ToolItem key={name}>{icon}{name}</ToolItem>)}
        </ToolList>
        {['Use Case Relationships', 'Use Case Patterns', 'Common', 'Artifacts'].map((s) => (
          <SectionRow key={s}><Collapsed c="#999" w={8} />{s}</SectionRow>
        ))}
      </ToolBody>
    </Panel>
  );
}

function Document() {
  return (
    <Doc>
      <DocHead>
        <I w={14} h={14}><path d="M7 1L1 7l6 6M13 1L7 7l6 6" stroke="#222" strokeWidth="2.200" /></I>
        <CloseGap><UseCaseDiagram /></CloseGap>
        <DocTitle>Use Case Diagram: "Actors"</DocTitle>
        <HeadIcons>
          <button aria-label="Document menu"><Down s={11} c="#111" /></button>
          <CloseGap as="button" aria-label="Close document"><Cross s={10} c="#111" w={3} /></CloseGap>
        </HeadIcons>
      </DocHead>
      <DocTabs>
        <DocTab><Logo s={24} />Start Page</DocTab>
        <DocTab><UseCaseDiagram />Use Case Model</DocTab>
        <DocTab $active><UseCaseDiagram />*Actors<CloseGap><Cross /></CloseGap></DocTab>
        <ScrollTabs><HollowTri left /><HollowTri /></ScrollTabs>
      </DocTabs>
      <DocMain>
        <Canvas>
          <Figure $x={110} $y={88}>
            <I w={40} h={60}><circle cx="20" cy="19" r="17.500" fill="#f0cf9c" stroke="#222" strokeWidth="2" /></I>
          </Figure>
          <Figure $x={107} $y={380}>
            <I w={40} h={34}><path d="M20 0v2L2 33M20 2l18 31" stroke="#222" strokeWidth="2" /></I>
            Presenter
          </Figure>
          <Figure $x={107} $y={532}>
            <I w={46} h={96}>
              <circle cx="23" cy="18" r="16.500" fill="#f0cf9c" stroke="#222" strokeWidth="2" />
              <path d="M23 35v31M0 42h46M23 66L5 96M23 66l18 30" stroke="#222" strokeWidth="2" />
            </I>
            Attendee
          </Figure>
        </Canvas>
        <VScroll>
          <ScrollBtn aria-label="Scroll up"><Tri d="M7 3l7 8H0z" /></ScrollBtn>
          <VThumb />
          <ScrollBtn aria-label="Scroll down"><Tri d="M0 3h14l-7 8z" /></ScrollBtn>
        </VScroll>
        <HScroll>
          <ScrollBtn aria-label="Scroll left"><Tri d="M3 7l8-7v14z" /></ScrollBtn>
          <HThumb />
          <ScrollBtn aria-label="Scroll right"><Tri d="M11 7L3 0v14z" /></ScrollBtn>
        </HScroll>
        <Corner />
      </DocMain>
    </Doc>
  );
}

function NewElement() {
  return (
    <Highlight>
      <Dialog onSubmit={(e) => e.preventDefault()}>
        <DialogHead>New Element<button type="button" aria-label="Close dialog"><Cross c="#fff" /></button></DialogHead>
        <DialogBody>
          <FormRow $h={34} $mb={11}>
            <FormLabel $w={98} htmlFor="name">Na<u>m</u>e:</FormLabel>
            <NameBox><Field id="name" $w={502} $h={34} /><Caret /></NameBox>
            <PushButton type="button" $w={57} $right><span><u>A</u>uto</span></PushButton>
          </FormRow>
          <FormRow $h={34} $mb={6}>
            <FormLabel $w={98} htmlFor="type">T<u>y</u>pe:</FormLabel>
            <SelectWrap $w={200} $h={30}>
              <Select id="type" $soft><option>Actor</option></Select><Down c="#555" />
            </SelectWrap>
            <FormLabel $w={86} $pad={18} htmlFor="toolset">Toolset:</FormLabel>
            <ReadOnly id="toolset" readOnly defaultValue="UML::UseCase" />
            <PushButton type="button" $w={97} $right><span><u>T</u>oolset</span><Down s={14} c="#555" /></PushButton>
          </FormRow>
          <FormRow $h={30} $mb={12}>
            <FormLabel $w={98} htmlFor="stereotype">Ste<u>r</u>eotype:</FormLabel>
            <SelectWrap $w={200} $h={30}>
              <Select id="stereotype" $soft /><Down c="#555" />
            </SelectWrap>
          </FormRow>
          <CheckLabel><Check type="checkbox" /><span>A<u>d</u>d Element to Current Diagram</span></CheckLabel>
          <ButtonRow>
            <PushButton $w={119}><span><u>S</u>ave</span></PushButton>
            <PushButton $w={119} $def><span>Save and <u>E</u>xit</span></PushButton>
            <PushButton $w={119}><span><u>C</u>ancel</span></PushButton>
            <PushButton $w={119}><span><u>H</u>elp</span></PushButton>
          </ButtonRow>
        </DialogBody>
      </Dialog>
      <Pointer width="18" height="30" viewBox="0 0 18 30" aria-hidden="true">
        <path d="M1 1v23l5-5 4 9 4-2-4-8h7z" fill="#fff" stroke="#222" strokeWidth="1.8" />
      </Pointer>
    </Highlight>
  );
}

export default function App() {
  return (
    <>
      <Global />
      <Page>
        <Shadow>
          <Frame>
            <Video>
              <Header />
              <RibbonBar />
              <Work>
                <ProjectBrowser />
                <Toolbox />
                <Document />
                <SideStrip><SideLabel>Start</SideLabel><SideMark /></SideStrip>
              </Work>
            </Video>
            <NewElement />
            <Shade />
            <TopCaption>选择 element的类型</TopCaption>
            <Subtitle>Select the type of element, that I want.</Subtitle>
            <Progress>
              <ProgressTrack>
                <Played style={{ width: '59.4%' }} />
                <Buffered style={{ width: '14.5%' }} />
              </ProgressTrack>
            </Progress>
            <Autoplay aria-label="Autoplay">
              <I w={68} h={42}>
                <rect x="16" y="8" width="51" height="27" rx="13.5" fill="#b4b4b4" fillOpacity="0.75" />
                <circle cx="21" cy="21" r="20" fill="#5e5e5e" stroke="#6e6e6e" />
                <path d="M14 13h6v17h-6zM24 13h6v17h-6z" fill="#fff" />
              </I>
            </Autoplay>
            <CcButton aria-label="Subtitles">
              <I w={34} h={34}>
                <rect width="34" height="34" rx="4" fill="#fff" />
                <path d="M5 17h5M14 17h15M5 26h15M24 26h5" stroke="#000" strokeWidth="4" />
              </I>
              <I w={36} h={6}><rect x="-2" width="38" height="6" rx="3" fill="#f00" /></I>
            </CcButton>
          </Frame>
        </Shadow>
      </Page>
    </>
  );
}
